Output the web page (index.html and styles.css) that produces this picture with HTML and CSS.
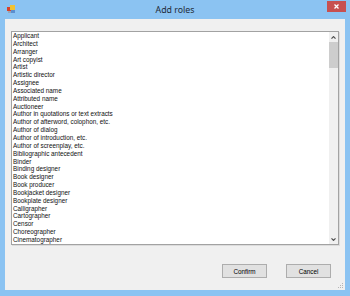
FILE: index.html
```html
<html>
<head>
    <title>Add roles</title>
<link rel="stylesheet" href="styles.css">
</head>
<body>
  <div class="window">
    <div class="titlebar">
      <svg class="app-icon" width="9" height="9" viewBox="0 0 9 9">
        <rect x="0" y="2" width="4" height="4" fill="#d9412b"/>
        <rect x="3" y="0" width="5" height="5" fill="#f2c230"/>
        <rect x="4" y="5" width="4" height="3" fill="#5b8fd0"/>
        <rect x="1" y="6" width="3" height="2" fill="#9aa5b4"/>
      </svg>
      <span class="title">Add roles</span>
      <div class="close">
        <svg width="5" height="5" viewBox="0 0 5 5">
          <path d="M0.5 0.5 L4.5 4.5 M4.5 0.5 L0.5 4.5" stroke="#fff" stroke-width="1.3"/>
        </svg>
      </div>
    </div>
    <div class="client">
      <div class="listbox">
        <ul class="items">
          <li>Applicant</li>
          <li>Architect</li>
          <li>Arranger</li>
          <li>Art copyist</li>
          <li>Artist</li>
          <li>Artistic director</li>
          <li>Assignee</li>
          <li>Associated name</li>
          <li>Attributed name</li>
          <li>Auctioneer</li>
          <li>Author in quotations or text extracts</li>
          <li>Author of afterword, colophon, etc.</li>
          <li>Author of dialog</li>
          <li>Author of introduction, etc.</li>
          <li>Author of screenplay, etc.</li>
          <li>Bibliographic antecedent</li>
          <li>Binder</li>
          <li>Binding designer</li>
          <li>Book designer</li>
          <li>Book producer</li>
          <li>Bookjacket designer</li>
          <li>Bookplate designer</li>
          <li>Calligrapher</li>
          <li>Cartographer</li>
          <li>Censor</li>
          <li>Choreographer</li>
          <li>Cinematographer</li>
        </ul>
        <div class="scrollbar">
          <div class="arrow">
            <svg width="5" height="3" viewBox="0 0 5 3"><path d="M0.5 2.6 L2.5 0.6 L4.5 2.6" fill="none" stroke="#505050" stroke-width="1.2"/></svg>
          </div>
          <div class="thumb"></div>
          <div class="track"></div>
          <div class="arrow">
            <svg width="5" height="3" viewBox="0 0 5 3"><path d="M0.5 0.4 L2.5 2.4 L4.5 0.4" fill="none" stroke="#505050" stroke-width="1.2"/></svg>
          </div>
        </div>
      </div>
      <div class="buttons">
        <button type="button">Confirm</button>
        <button type="button">Cancel</button>
      </div>
      <svg class="grip" width="6" height="6" viewBox="0 0 6 6">
        <rect x="4" y="0" width="1" height="1" fill="#b5b5b5"/>
        <rect x="2" y="2" width="1" height="1" fill="#b5b5b5"/>
        <rect x="4" y="2" width="1" height="1" fill="#b5b5b5"/>
        <rect x="0" y="4" width="1" height="1" fill="#b5b5b5"/>
        <rect x="2" y="4" width="1" height="1" fill="#b5b5b5"/>
        <rect x="4" y="4" width="1" height="1" fill="#b5b5b5"/>
      </svg>
    </div>
  </div>
</body>
</html>
```

FILE: styles.css
```css
body {
  margin: 0;
  font-family: "Liberation Sans", Arial, sans-serif;
}

.window {
  width: 350px;
  height: 296px;
  background-color: #8bc3f2;
  display: flex;
  flex-direction: column;
}

.titlebar {
  height: 19px;
  display: grid;
  grid-template-columns: 1fr auto 1fr;
  align-items: center;
}

.app-icon {
  justify-self: start;
  margin-left: 7px;
}

.title {
  font-family: "Noto Sans", sans-serif;
  font-size: 8.8px;
  color: #1f2b38;
  padding-top: 1px;
}

.close {
  justify-self: end;
  align-self: start;
  margin-top: 1px;
  margin-right: 4px;
  width: 19px;
  height: 11px;
  background-color: #c75050;
  display: flex;
  align-items: center;
  justify-content: center;
}

.client {
  flex: 1;
  margin: 0 5px 6px 5px;
  padding: 12px 6px 12px 6px;
  background-color: #f0f0f0;
  display: flex;
  flex-direction: column;
  position: relative;
}

.listbox {
  height: 214px;
  box-sizing: border-box;
  border: 1px solid #a2a2a2;
  background-color: #fff;
  display: flex;
  box-shadow: 1px 1px 0 #dcdcdc;
}

.items {
  flex: 1;
  list-style: none;
  margin: 0;
  padding: 0 0 0 1px;
  font-size: 6.35px;
  line-height: 7.85px;
  color: #111;
  overflow: hidden;
  white-space: nowrap;
}

.scrollbar {
  width: 9px;
  background-color: #f0f0f0;
  display: flex;
  flex-direction: column;
}

.arrow {
  height: 10px;
  display: flex;
  align-items: center;
  justify-content: center;
}

.thumb {
  height: 26px;
  background-color: #cdcdcd;
}

.track {
  flex: 1;
}

.buttons {
  margin-top: 19px;
  padding-right: 8px;
  display: flex;
  justify-content: flex-end;
  gap: 19px;
}

.buttons button {
  width: 45px;
  height: 14px;
  padding: 0;
  background-color: #e1e1e1;
  border: 1px solid #adadad;
  font-family: "Liberation Sans", Arial, sans-serif;
  font-size: 6.35px;
  color: #000;
}

.grip {
  position: absolute;
  right: 1px;
  bottom: 1px;
}
```
